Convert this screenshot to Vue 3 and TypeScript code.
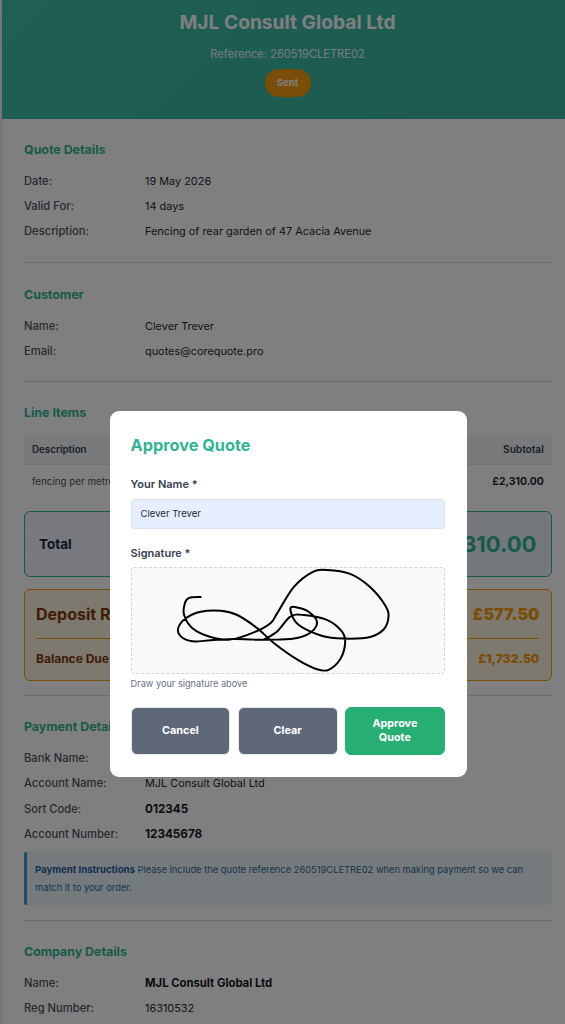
<script setup lang="ts">
const pts: [number, number][] = [
  [240,110],[205,113],[192,130],[190,165],[215,205],[270,232],[330,240],[400,218],[450,190],[470,160],[520,80],[575,35],[620,28],[690,40],[750,80],[798,140],[805,175],[790,210],[750,232],[690,237],[620,232],[560,210],[525,185],[510,145],[530,142],[565,155],[590,185],[575,215],[530,235],[470,240],[400,240],[340,238],[270,242],[215,245],[180,230],[172,205],[195,175],[240,155],[300,152],[350,165],[410,205],[460,250],[530,300],[590,330],[625,332],[660,300],[675,250],[665,215],[620,180],[550,165],[510,170],[470,215],[430,240]
]
function smooth(p: [number, number][]): string {
  let d = `M${p[0][0]} ${p[0][1]}`
  for (let i = 0; i < p.length - 1; i++) {
    const a = p[Math.max(i - 1, 0)], b = p[i], c = p[i + 1], e = p[Math.min(i + 2, p.length - 1)]
    d += ` C${b[0] + (c[0] - a[0]) / 6} ${b[1] + (c[1] - a[1]) / 6} ${c[0] - (e[0] - b[0]) / 6} ${c[1] - (e[1] - b[1]) / 6} ${c[0]} ${c[1]}`
  }
  return d
}
const sig = smooth(pts)
</script>

<template>
  <div class="viewport">
    <div class="page">
      <header class="hero">
        <h1>MJL Consult Global Ltd</h1>
        <p>Reference: 260519CLETRE02</p>
        <span class="badge">Sent</span>
      </header>
      <main class="content">
        <section class="sec first">
          <h2>Quote Details</h2>
          <div class="row"><span class="k">Date:</span><span>19 May 2026</span></div>
          <div class="row"><span class="k">Valid For:</span><span>14 days</span></div>
          <div class="row"><span class="k">Description:</span><span>Fencing of rear garden of 47 Acacia Avenue</span></div>
        </section>
        <section class="sec cust">
          <h2>Customer</h2>
          <div class="row"><span class="k">Name:</span><span>Clever Trever</span></div>
          <div class="row"><span class="k">Email:</span><span>quotes@corequote.pro</span></div>
        </section>
        <section class="sec items">
          <h2>Line Items</h2>
          <div class="thead"><span>Description</span><span class="sub">Subtotal</span></div>
          <div class="tbody"><span>fencing per metre</span><strong>£2,310.00</strong></div>
          <div class="total"><span>Total</span><strong>£2,310.00</strong></div>
          <div class="deposit">
            <div class="dep-top"><span>Deposit Required</span><strong>£577.50</strong></div>
            <div class="dep-bot"><span>Balance Due</span><strong>£1,732.50</strong></div>
          </div>
        </section>
        <section class="sec pay">
          <h2>Payment Details</h2>
          <div class="row"><span class="k">Bank Name:</span><span>Bank</span></div>
          <div class="row"><span class="k">Account Name:</span><span>MJL Consult Global Ltd</span></div>
          <div class="row"><span class="k">Sort Code:</span><strong class="num">012345</strong></div>
          <div class="row"><span class="k">Account Number:</span><strong class="num">12345678</strong></div>
          <div class="note"><strong>Payment Instructions</strong> Please include the quote reference 260519CLETRE02 when making payment so we can match it to your order.</div>
        </section>
        <section class="sec">
          <h2>Company Details</h2>
          <div class="row"><span class="k">Name:</span><strong>MJL Consult Global Ltd</strong></div>
          <div class="row"><span class="k">Reg Number:</span><span>16310532</span></div>
        </section>
      </main>
      <div class="scrim"></div>
    </div>
    <div class="overlay">
      <div class="modal">
        <h3>Approve Quote</h3>
        <label class="lbl">Your Name *</label>
        <div class="input">Clever Trever</div>
        <label class="lbl sigl">Signature *</label>
        <div class="canvas">
          <svg viewBox="33 22 940 318" preserveAspectRatio="none" fill="none">
            <path :d="sig" stroke="#000" stroke-width="6" stroke-linecap="round" stroke-linejoin="round" />
          </svg>
        </div>
        <div class="hint">Draw your signature above</div>
        <div class="actions">
          <button class="btn grey">Cancel</button>
          <button class="btn grey">Clear</button>
          <button class="btn green">Approve Quote</button>
        </div>
      </div>
    </div>
  </div>
</template>

<style>
html, body { margin: 0; background: #ececec; overflow: hidden; }
</style>

<style scoped>
* { box-sizing: border-box; }
.viewport { position: relative; width: 565px; height: 1024px; overflow: hidden; font-family: Inter, "Liberation Sans", sans-serif; color: #1f2937; }
.page { position: absolute; inset: 0; overflow: hidden; }
.hero { margin-left: 2px; width: 571px; height: 119px; background: linear-gradient(135deg, #3cc0a2, #3ab4a4); color: #fff; text-align: center; padding-top: 11px; }
.hero h1 { margin: 0; font-size: 19.2px; line-height: 23px; font-weight: 700; }
.hero p { margin: 13px 0 0; font-size: 11.1px; line-height: 14px; opacity: .9; }
.badge { display: inline-block; margin-top: 8px; width: 46px; height: 28px; line-height: 28px; border-radius: 14px; background: #f39c12; font-size: 9.5px; font-weight: 700; }
.content { margin-left: 2px; width: 571px; padding: 0 20.6px 0 22px; background: #fff; }
.sec { border-top: 1px solid #ddd; padding-top: 22px; padding-bottom: 17px; }
.sec.first { border-top: 0; padding-top: 22px; padding-bottom: 17.8px; }
.sec.cust { padding-top: 23px; }
.sec.items, .sec.pay { padding-bottom: 14.5px; }
h2 { margin: 0 0 9px; font-size: 12.4px; line-height: 18px; font-weight: 700; color: #2fb593; }
.row { display: flex; height: 25.4px; align-items: center; font-size: 10.9px; color: #1f2937; }
.k { width: 121px; color: #4b5563; flex: none; font-size: 11.2px; font-weight: 500; }
.row strong { font-size: 11.3px; font-weight: 700; color: #111827; }
.row strong.num { font-size: 11.7px; }
.thead, .tbody { display: flex; justify-content: space-between; align-items: center; padding: 0 8.6px 0 8px; font-size: 9.8px; }
.items h2 { margin-bottom: 13px; }
.thead { height: 30px; background: #f3f4f6; font-weight: 600; color: #374151; border-bottom: 1px solid #e5e7eb; }
.sub { font-size: 10.1px; }
.tbody { height: 33px; color: #4b5563; }
.tbody strong { font-size: 10.4px; color: #1f2937; }
.total { margin-top: 13px; height: 66.5px; display: flex; align-items: center; justify-content: space-between; padding: 0 15px 0 14px; border: 1px solid #2fb593; border-radius: 6px; background: linear-gradient(135deg,#f0f4ff,#e8eef8); }
.total span { font-size: 13.5px; font-weight: 700; }
.total strong { font-size: 22px; color: #2fb593; }
.deposit { margin-top: 12px; height: 91.5px; border: 1px solid #f39c12; border-radius: 6px; background: #fdf3dc; padding: 0 12px 0 11px; color: #7c3a10; }
.dep-top { height: 49px; display: flex; justify-content: space-between; align-items: center; border-bottom: 1px solid #f39c12; font-size: 16px; font-weight: 700; }
.dep-top strong { color: #f39c12; }
.dep-bot { height: 38px; display: flex; justify-content: space-between; align-items: center; font-size: 12px; font-weight: 700; }
.dep-bot strong { color: #f39c12; }
.note { margin-top: 5px; height: 53.6px; background: #ebf5fb; border-left: 3px solid #3498db; border-radius: 2px; padding: 9px 8px; font-size: 9.33px; line-height: 18px; color: #2c6aa0; }
.note strong { font-size: 9.6px; color: #1f5f99; }
.scrim { position: absolute; inset: 0; background: rgba(0,0,0,.5); }
.overlay { position: absolute; left: 0; top: 0; width: 576.6px; height: 1188px; display: flex; align-items: center; justify-content: center; }
.modal { width: 357.4px; height: 366px; background: #fff; border-radius: 9px; padding: 21px 22.3px 21px 21px; }
h3 { margin: 0; font-size: 16.3px; line-height: 26px; font-weight: 700; color: #2fb593; }
.lbl { display: block; margin-top: 18px; font-size: 11px; line-height: 16px; font-weight: 600; color: #374151; }
.input { margin-top: 7px; height: 30px; line-height: 28px; padding: 0 9px; background: #e6effd; border: 1px solid #d8e2f0; border-radius: 4px; font-size: 9.5px; color: #1f2937; }
.lbl.sigl { margin-top: 16px; }
.canvas { margin-top: 6.3px; height: 106.5px; background: #f8f9fb; border: 1px dashed #d1d5db; border-radius: 3px; }
.canvas svg { display: block; width: 100%; height: 100%; overflow: visible; }
.hint { margin-top: 4px; font-size: 9.2px; line-height: 12px; color: #6b7280; }
.actions { margin-top: 17px; display: flex; gap: 7.5px; }
.btn { flex: 1 1 0; min-width: 0; height: 48px; border: 1px solid #e5e7eb; border-radius: 6px; color: #fff; font: 700 10.8px/14px Inter, "Liberation Sans", sans-serif; padding: 0 20px; }
.grey { background: #5f6878; }
.green { background: #27ae73; border-color: #27ae73; }
</style>
